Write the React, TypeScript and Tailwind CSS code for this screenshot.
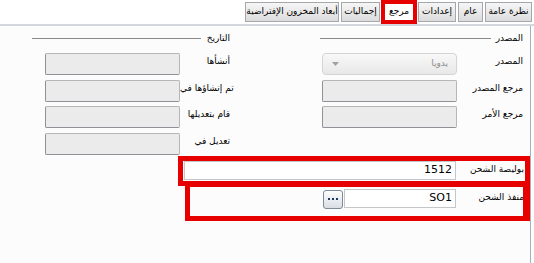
import React from "react";

const font = { fontFamily: '"DejaVu Sans", "Noto Sans", sans-serif' };

function Tab({ label, w, selected }: { label: string; w: string; selected?: boolean }) {
  if (selected) {
    return (
      <div className={`${w} h-[24px] border-[4px] border-[#e60000] bg-white flex items-center justify-center text-[9px] text-black relative z-10 overflow-hidden whitespace-nowrap`}>
        {label}
      </div>
    );
  }
  return (
    <div
      className={`${w} h-[20px] mt-[2px] border border-[#a4a7ab] bg-gradient-to-b from-[#f6f6f6] to-[#dcdcdc] flex items-center justify-center text-[9px] text-black whitespace-nowrap overflow-hidden`}
    >
      {label}
    </div>
  );
}

function DisabledBox() {
  return <div className="w-[135px] h-[22px] rounded-[2px] border border-[#b4b6b8] border-l-[#8e9296] border-b-[#8e9296] bg-[#ebebeb]" />;
}

function Row({ label, labelW, children }: { label: string; labelW: string; children: React.ReactNode }) {
  return (
    <div className="flex justify-end items-start">
      {children}
      <div className={`${labelW} text-right text-[9px] leading-[12px] pt-[2px] text-black whitespace-nowrap`}>{label}</div>
    </div>
  );
}

function Header({ label, gap }: { label: string; gap: string }) {
  return (
    <div className="flex items-center h-[12px]">
      <div className="flex-1 h-px bg-[#8a8a8a]" />
      <div className={`${gap} text-[9px] leading-[12px] text-black whitespace-nowrap`}>{label}</div>
    </div>
  );
}

export default function App() {
  return (
    <div dir="ltr" className="relative w-[534px] h-[263px] bg-[#fcfcfc] overflow-hidden flex flex-col" style={font}>
      {/* tab strip */}
      <div className="h-[24px] flex items-start justify-end pr-[2px] bg-white">
        <Tab label="أبعاد المخزون الإفتراضية" w="w-[94px]" />
        <div className="w-[2px]" />
        <Tab label="إجماليات" w="w-[39px]" />
        <div className="w-[1px]" />
        <Tab label="مرجع" w="w-[36px]" selected />
        <div className="w-[1px]" />
        <Tab label="إعدادات" w="w-[38px]" />
        <div className="w-[2px]" />
        <Tab label="عام" w="w-[25px]" />
        <div className="w-[2px]" />
        <Tab label="نظرة عامة" w="w-[47px]" />
      </div>
      <div className="h-[2px] bg-[#d3d7dd]" />

      {/* panel */}
      <div className="flex-1 w-[531px] border-r border-[#a9afb6] flex flex-col">
        <div className="flex justify-between pl-[32px] pr-[7px] pt-[6px]">
          {/* left column: التاريخ */}
          <div className="w-[198px] flex flex-col">
            <Header label="التاريخ" gap="ml-[6px]" />
            <div className="flex flex-col gap-[4.5px] mt-[9px]">
              <Row label="أنشأها" labelW="w-[50px]"><DisabledBox /></Row>
              <Row label="تم إنشاؤها في" labelW="w-[50px]"><DisabledBox /></Row>
              <Row label="قام بتعديلها" labelW="w-[50px]"><DisabledBox /></Row>
              <Row label="تعديل في" labelW="w-[50px]"><DisabledBox /></Row>
            </div>
          </div>
          {/* right column: المصدر */}
          <div className="w-[203px] flex flex-col">
            <Header label="المصدر" gap="ml-[5px]" />
            <div className="flex flex-col gap-[4.5px] mt-[9px]">
              <Row label="المصدر" labelW="w-[66px]">
                <div className="w-[135px] h-[22px] rounded-[4px] border border-[#d2d4d6] bg-gradient-to-b from-[#f8f8f8] to-[#e8e8e8] flex items-center justify-between pl-[9px] pr-[8px]">
                  <svg width="7" height="4" viewBox="0 0 7 4"><path d="M0 0h7L3.5 4z" fill="#a0a0a0" /></svg>
                  <span className="text-[9px] text-[#8c8c8c]">يدويا</span>
                </div>
              </Row>
              <Row label="مرجع المصدر" labelW="w-[66px]"><DisabledBox /></Row>
              <Row label="مرجع الأمر" labelW="w-[66px]"><DisabledBox /></Row>
            </div>
          </div>
        </div>

        {/* bottom rows */}
        <div className="flex flex-col pr-[6px] mt-[6px]">
          <Row label="بوليصة الشحن" labelW="w-[68px]">
            <div className="w-[272px] h-[19px] bg-white border border-[#c4c6c8] flex items-center justify-end pr-[3px] text-[11px] text-black">1512</div>
          </Row>
          <div className="h-[9px]" />
          <Row label="منفذ الشحن" labelW="w-[68px]">
            <div className="w-[20px] h-[19px] mt-[1px] rounded-[3px] border border-[#7d8a97] bg-gradient-to-b from-[#fdfdfd] to-[#d9dee5] flex items-center justify-center gap-[2px]">
              <span className="w-[2px] h-[2px] bg-[#1d3a66]" />
              <span className="w-[2px] h-[2px] bg-[#1d3a66]" />
              <span className="w-[2px] h-[2px] bg-[#1d3a66]" />
            </div>
            <div className="ml-[1px] w-[112px] h-[19px] bg-white border border-[#c4c6c8] flex items-center justify-end pr-[3px] text-[11px] text-black">SO1</div>
          </Row>
        </div>
      </div>

      {/* red annotation boxes */}
      <div className="absolute left-[178px] top-[156px] w-[352px] h-[30px] border-[5px] border-[#e60000]" />
      <div className="absolute left-[185px] top-[182px] w-[345px] h-[39px] border-[5px] border-r-[7px] border-[#e60000]" />
    </div>
  );
}
